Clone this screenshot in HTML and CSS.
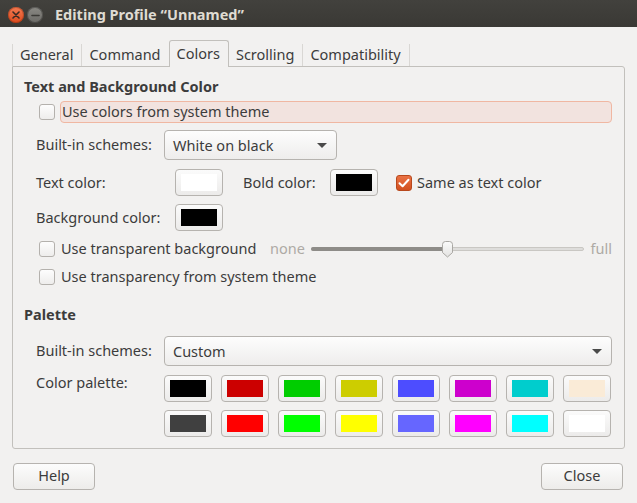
FILE: index.html
```html
<!DOCTYPE html>
<html>
<head>
<meta charset="utf-8">
<title>Editing Profile</title>
<link rel="stylesheet" href="styles.css">
</head>
<body>
<div class="window">
  <header class="titlebar">
    <span class="wbtn close">
      <svg width="8" height="8" viewBox="0 0 8 8"><path d="M1 1L7 7M7 1L1 7" stroke="#3a2a24" stroke-width="1.6" stroke-linecap="round"/></svg>
    </span>
    <span class="wbtn min">
      <svg width="9" height="3" viewBox="0 0 9 3"><path d="M1 1.5H8" stroke="#3b3a36" stroke-width="1.6" stroke-linecap="round"/></svg>
    </span>
    <span class="title">Editing Profile “Unnamed”</span>
  </header>

  <main class="content">
    <nav class="tabs">
      <span class="tab first">General</span>
      <span class="tab">Command</span>
      <span class="tab active">Colors</span>
      <span class="tab">Scrolling</span>
      <span class="tab">Compatibility</span>
    </nav>

    <section class="frame">
      <h2 class="heading">Text and Background Color</h2>

      <div class="check-row first-check">
        <span class="check"></span>
        <span class="highlight">Use colors from system theme</span>
      </div>

      <div class="form-row schemes-row">
        <span class="label">Built-in schemes:</span>
        <div class="combo short"><span class="ctxt">White on black</span><span class="arrow"></span></div>
      </div>

      <div class="form-row color-row">
        <span class="label wide">Text color:</span>
        <span class="cbtn"><span class="swatch" style="background:#ffffff"></span></span>
        <span class="label bold-label">Bold color:</span>
        <span class="cbtn"><span class="swatch" style="background:#000000"></span></span>
        <span class="check checked">
          <svg width="12" height="10" viewBox="0 0 12 10"><path d="M1.5 5.2L4.6 8.2L10.5 1.8" fill="none" stroke="#fff" stroke-width="2" stroke-linecap="round" stroke-linejoin="round"/></svg>
        </span>
        <span class="txt">Same as text color</span>
      </div>

      <div class="form-row bg-row">
        <span class="label wide">Background color:</span>
        <span class="cbtn"><span class="swatch" style="background:#000000"></span></span>
      </div>

      <div class="check-row trans-row">
        <span class="check"></span>
        <span class="txt trans-label">Use transparent background</span>
        <span class="txt dim">none</span>
        <div class="slider">
          <div class="trough"><span class="fill"></span></div>
          <svg class="knob" width="13" height="17" viewBox="0 0 13 17"><defs><linearGradient id="kg" x1="0" y1="0" x2="0" y2="1"><stop offset="0" stop-color="#fbfbfb"/><stop offset="1" stop-color="#e4e3e1"/></linearGradient></defs><path d="M1.5 3.5Q1.5 0.5 4.5 0.5H8.5Q11.5 0.5 11.5 3.5V11.5L6.5 16L1.5 11.5Z" fill="url(#kg)" stroke="#a9a7a3"/></svg>
        </div>
        <span class="txt dim">full</span>
      </div>

      <div class="check-row sys-row">
        <span class="check"></span>
        <span class="txt">Use transparency from system theme</span>
      </div>

      <h2 class="heading palette-heading">Palette</h2>

      <div class="form-row schemes2-row">
        <span class="label">Built-in schemes:</span>
        <div class="combo long"><span class="ctxt">Custom</span><span class="arrow"></span></div>
      </div>

      <div class="form-row palette-row">
        <span class="label palette-label">Color palette:</span>
        <div class="palette">
          <span class="cbtn"><span class="swatch" style="background:#000000"></span></span>
          <span class="cbtn"><span class="swatch" style="background:#cc0000"></span></span>
          <span class="cbtn"><span class="swatch" style="background:#00cd00"></span></span>
          <span class="cbtn"><span class="swatch" style="background:#cdcd00"></span></span>
          <span class="cbtn"><span class="swatch" style="background:#4d4dff"></span></span>
          <span class="cbtn"><span class="swatch" style="background:#cd00cd"></span></span>
          <span class="cbtn"><span class="swatch" style="background:#00cdcd"></span></span>
          <span class="cbtn"><span class="swatch" style="background:#faebd7"></span></span>
          <span class="cbtn"><span class="swatch" style="background:#404040"></span></span>
          <span class="cbtn"><span class="swatch" style="background:#ff0000"></span></span>
          <span class="cbtn"><span class="swatch" style="background:#00ff00"></span></span>
          <span class="cbtn"><span class="swatch" style="background:#ffff00"></span></span>
          <span class="cbtn"><span class="swatch" style="background:#6666ff"></span></span>
          <span class="cbtn"><span class="swatch" style="background:#ff00ff"></span></span>
          <span class="cbtn"><span class="swatch" style="background:#00ffff"></span></span>
          <span class="cbtn"><span class="swatch" style="background:#ffffff"></span></span>
        </div>
      </div>
    </section>

    <footer class="footer">
      <button class="btn">Help</button>
      <button class="btn">Close</button>
    </footer>
  </main>
</div>
</body>
</html>
```

FILE: styles.css
```css
* { box-sizing: border-box; margin: 0; padding: 0; }
html, body { width: 637px; height: 503px; overflow: hidden; }
body {
  background: #f2f1f0;
  font-family: "Noto Sans", "DejaVu Sans", sans-serif;
  font-size: 14.5px;
  line-height: 20px;
  color: #3c3c3c;
}

/* title bar */
.titlebar {
  height: 27px;
  background: linear-gradient(#42413d, #3a3935);
  display: flex;
  align-items: center;
  padding-left: 8px;
}
.wbtn {
  width: 16px; height: 16px;
  border-radius: 50%;
  display: flex; align-items: center; justify-content: center;
  margin-top: 3px;
}
.wbtn.close {
  background: linear-gradient(#f47b52, #dc4b1e);
  box-shadow: inset 0 0 0 1px rgba(120,30,0,0.35);
}
.wbtn.min {
  margin-left: 3px;
  background: linear-gradient(#8a8984, #6b6a66);
  box-shadow: inset 0 0 0 1px rgba(0,0,0,0.3);
}
.title {
  margin-left: 12px;
  margin-top: 1px;
  font-weight: bold;
  font-size: 14.5px;
  color: #dfdbd2;
}

/* content */
.content { padding-top: 13px; }

.tabs {
  display: flex;
  align-items: flex-end;
  height: 27px;
  margin: 0 12px -1px 12px;
  position: relative;
  z-index: 1;
}
.tab {
  height: 22px;
  margin-bottom: 1px;
  padding: 0 8px 0 7px;
  line-height: 20px;
  border-right: 1px solid #d9d7d4;
  color: #3c3c3c;
}
.tab.first { border-left: 1px solid #d9d7d4; }
.tab.active {
  height: 27px;
  margin-bottom: 0;
  padding-top: 2px;
  border: 1px solid #c2c0bc;
  border-bottom: none;
  border-radius: 3px 3px 0 0;
  background: #f2f1f0;
  margin-left: -1px;
}

.frame {
  margin: 0 12px;
  height: 383px;
  border: 1px solid #c2c0bc;
  border-radius: 0 3px 3px 3px;
  padding: 9px 12px 0 11px;
}

.heading {
  font-size: 14.5px;
  font-weight: bold;
  line-height: 20px;
  color: #3c3c3c;
}

.txt, .label {
  line-height: 18px;
  padding-bottom: 2px;
}
.ctxt {
  line-height: 18px;
  padding-bottom: 1px;
}

.check {
  width: 16px; height: 16px;
  border: 1px solid #b4b1ad;
  border-radius: 3px;
  background: linear-gradient(#fdfdfd, #eeedec);
  flex: none;
  display: flex; align-items: center; justify-content: center;
}
.check.checked {
  background: linear-gradient(#ea7244, #d2501f);
  border-color: #b8481c;
}

.check-row {
  display: flex;
  align-items: center;
  height: 22px;
  padding-left: 15px;
}
.check-row > .check { margin-right: 6px; }

.first-check { margin-top: 5px; }
.first-check > .check { margin-right: 5px; }
.highlight {
  flex: 1;
  height: 22px;
  border: 1px solid #f0b7a2;
  border-radius: 4px;
  background: #f2e3df;
  padding-left: 1px;
  line-height: 18px;
}

.form-row {
  display: flex;
  align-items: center;
  padding-left: 12px;
}
.label { width: 128px; flex: none; }
.label.wide { width: 139px; }
.label.bold-label { width: 87px; margin-left: 20px; }

.combo {
  height: 30px;
  border: 1px solid #b6b3af;
  border-radius: 4px;
  background: linear-gradient(#fdfdfd, #eeedec);
  padding: 0 0 0 8px;
  display: flex;
  align-items: center;
  justify-content: space-between;
}
.combo.short { width: 173px; padding-right: 9px; }
.combo.long { flex: 1; padding-right: 9px; }
.arrow {
  width: 0; height: 0;
  border-left: 5px solid transparent;
  border-right: 5px solid transparent;
  border-top: 5px solid #4a4a4a;
}

.schemes-row { margin-top: 7px; }
.color-row { margin-top: 9px; }
.bg-row { margin-top: 8px; }
.trans-row { margin-top: 7px; }
.sys-row { margin-top: 6px; }
.palette-heading { margin-top: 16px; }
.schemes2-row { margin-top: 12px; }
.palette-row { margin-top: 9px; align-items: flex-start; }
.palette-label { line-height: 14px; padding-bottom: 0; }

.cbtn {
  width: 48px; height: 27px;
  flex: none;
  border: 1px solid #b6b3af;
  border-radius: 4px;
  background: linear-gradient(#fbfbfb, #ecebea);
  padding: 4px 5px;
  display: flex;
}
.swatch { flex: 1; height: 17px; }

.color-row .check { margin-left: 18px; margin-right: 5px; }

.trans-label { width: 209px; flex: none; }
.dim { color: #aeaaa5; }
.slider {
  flex: 1;
  position: relative;
  height: 17px;
  margin: 0 7px 0 6px;
  display: flex;
  align-items: center;
}
.trough {
  flex: 1;
  height: 4px;
  border-radius: 2px;
  background: #dedddb;
  border: 1px solid #c9c7c3;
  display: flex;
}
.fill {
  width: 50%;
  margin: -1px 0 0 -1px;
  height: 4px;
  border-radius: 2px 0 0 2px;
  background: #8e8c88;
}
.knob {
  position: absolute;
  left: 130px;
  top: 0;
}

.palette {
  flex: 1;
  display: grid;
  grid-template-columns: repeat(8, 48px);
  column-gap: 9px;
  row-gap: 8px;
}

.footer {
  display: flex;
  justify-content: space-between;
  padding: 14px 14px 0 13px;
}
.btn {
  width: 82px;
  height: 27px;
  border: 1px solid #b6b3af;
  border-radius: 4px;
  background: linear-gradient(#fcfcfc, #edecea);
  font: inherit;
  color: #3c3c3c;
  line-height: 23px;
  padding-bottom: 2px;
}
```
